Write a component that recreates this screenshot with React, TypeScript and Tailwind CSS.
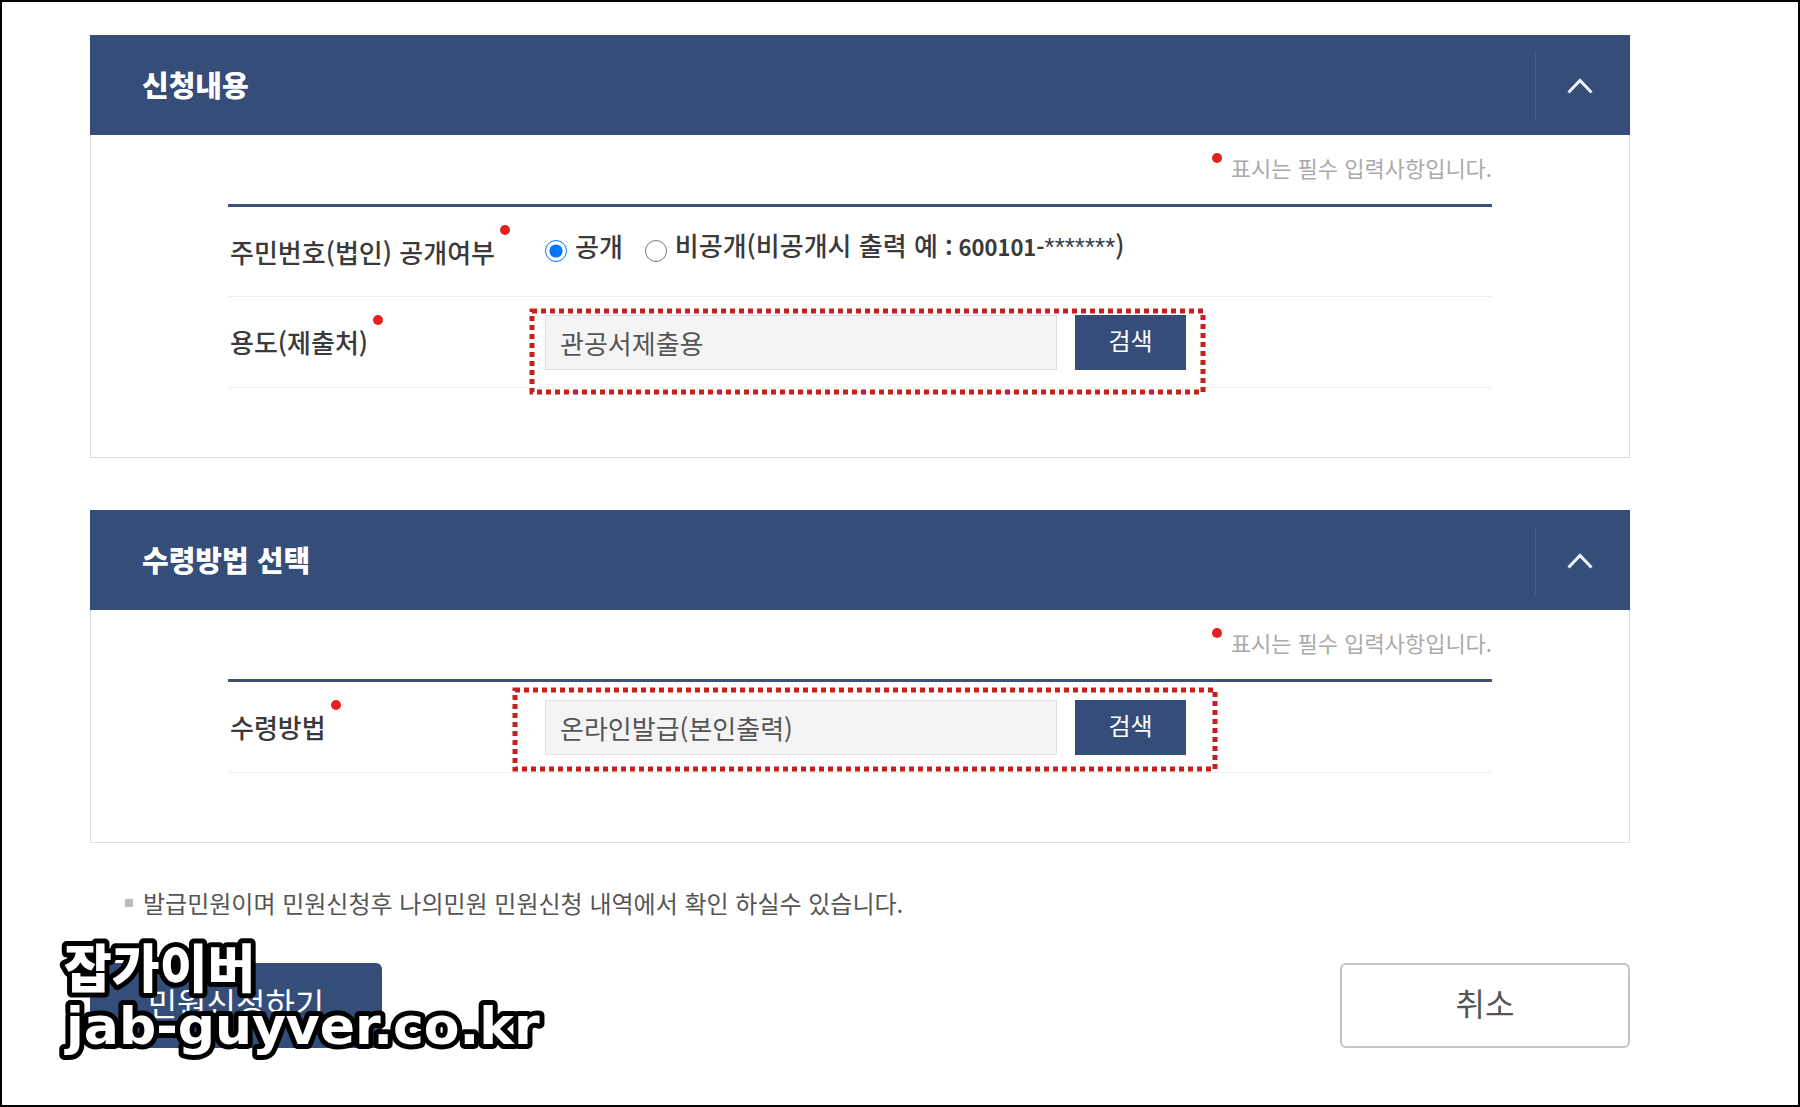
import { useState, type ReactNode } from "react";
import clsx from "clsx";

interface PanelProps {
  title: string;
  children: ReactNode;
}

interface SearchFieldProps {
  id: string;
  value: string;
  frameClassName: string;
}

function RequiredDot({ className }: { className?: string }) {
  return <span aria-hidden="true" className={clsx("size-[10px] shrink-0 rounded-full bg-[#e62020]", className)} />;
}

function Panel({ title, children }: PanelProps) {
  const [open, setOpen] = useState(true);

  return (
    <section>
      <header className="flex h-[100px] items-center bg-[#344d79] pt-[2px] pl-[52px]">
        <h2 className="flex-1 pb-[4px] text-[29px] leading-[40px] font-black text-white">{title}</h2>
        <button
          type="button"
          aria-label={title}
          aria-expanded={open}
          onClick={() => setOpen(!open)}
          className="flex h-[68px] w-[95px] items-center justify-center border-l border-[#47608a] pr-[6px] text-[#eef2f8]"
        >
          <svg width="26" height="16" viewBox="0 0 26 16" fill="none" stroke="currentColor" strokeWidth="3">
            <path d="M1.5 14.5 13 2.5l11.5 12" />
          </svg>
        </button>
      </header>
      {open && (
        <div className="border border-t-0 border-[#dcdcdc] px-[137px] pb-[69px]">
          <p className="flex h-[69px] items-center justify-end gap-[9px] pb-[5px] text-[22px] leading-[32px] text-[#aaa]">
            <RequiredDot className="mb-[18px]" />
            표시는 필수 입력사항입니다.
          </p>
          <div className="border-t-3 border-[#3d5276]">{children}</div>
        </div>
      )}
    </section>
  );
}

function Row({ label, htmlFor, children }: { label: string; htmlFor?: string; children: ReactNode }) {
  const text = (
    <>
      {label}
      <RequiredDot className="mb-[44px]" />
    </>
  );
  const labelClass =
    "flex w-[317px] shrink-0 items-center gap-[5px] pl-[2px] text-[26px] leading-[36px] font-medium text-[#3a3a3a]";

  return (
    <div className={clsx("flex items-center border-b border-[#eee]", htmlFor ? "h-[91px]" : "h-[90px]")}>
      {htmlFor ? (
        <label htmlFor={htmlFor} className={labelClass}>{text}</label>
      ) : (
        <div className={labelClass}>{text}</div>
      )}
      {children}
    </div>
  );
}

function SearchField({ id, value, frameClassName }: SearchFieldProps) {
  return (
    <div className="relative flex w-[641px] gap-[18px]">
      <input
        id={id}
        type="text"
        readOnly
        value={value}
        className="h-[55px] min-w-0 flex-1 border border-[#e0e0e0] bg-[#f4f4f4] px-[14px] text-[26px] text-[#555] outline-none"
      />
      <button type="button" className="h-[55px] w-[111px] bg-[#344d79] pb-[4px] text-[24px] leading-[32px] text-white">
        검색
      </button>
      {/* red dotted highlight around the field */}
      <div className={clsx("pointer-events-none absolute", frameClassName)}>
        <svg className="size-full overflow-visible">
          <rect width="100%" height="100%" fill="none" stroke="#c81e1e" strokeWidth="5" strokeDasharray="5 4" />
        </svg>
      </div>
    </div>
  );
}

export default function App() {
  const [visibility, setVisibility] = useState("public");

  return (
    <main
      lang="ko"
      className="relative min-h-screen border-2 border-black bg-white pt-[33px] pr-[168px] pb-[56px] pl-[88px] font-['Noto_Sans_CJK_KR',sans-serif]"
    >
      <form onSubmit={(e) => e.preventDefault()}>
        <div className="flex flex-col gap-[52px]">
          <Panel title="신청내용">
            <Row label="주민번호(법인) 공개여부">
              <div role="radiogroup" aria-label="주민번호(법인) 공개여부" className="flex gap-[22px] text-[26px] leading-[36px] font-medium text-[#3a3a3a]">
                <label className="flex items-center gap-[8px] pb-[12px]">
                  <input
                    type="radio"
                    name="visibility"
                    className="mt-[10px] size-[22px] accent-[#0075ff]"
                    checked={visibility === "public"}
                    onChange={() => setVisibility("public")}
                  />
                  공개
                </label>
                <label className="flex items-center gap-[8px] pb-[12px]">
                  <input
                    type="radio"
                    name="visibility"
                    className="mt-[10px] size-[22px]"
                    checked={visibility === "private"}
                    onChange={() => setVisibility("private")}
                  />
                  <span>
                    비공개(비공개시 출력 예 <span className="text-[22px] font-bold">: 600101-</span>
                    <span className="font-['Liberation_Sans',sans-serif] font-normal">*******</span>)
                  </span>
                </label>
              </div>
            </Row>
            <Row label="용도(제출처)" htmlFor="purpose">
              <SearchField
                id="purpose"
                value="관공서제출용"
                frameClassName="-top-[4px] -right-[17px] -bottom-[22px] -left-[13px]"
              />
            </Row>
          </Panel>

          <Panel title="수령방법 선택">
            <Row label="수령방법" htmlFor="delivery">
              <SearchField
                id="delivery"
                value="온라인발급(본인출력)"
                frameClassName="-top-[10px] -right-[29px] -bottom-[14px] -left-[30px]"
              />
            </Row>
          </Panel>
        </div>

        <p className="mt-[42px] flex items-center gap-[10px] pl-[35px] text-[24px] leading-[36px] text-[#555]">
          <span className="size-[8px] bg-[#bbb]" />
          발급민원이며 민원신청후 나의민원 민원신청 내역에서 확인 하실수 있습니다.
        </p>

        <div className="mt-[42px] flex justify-between text-[32px] leading-[44px]">
          <button type="submit" className="h-[85px] w-[292px] rounded-md bg-[#344d79] pb-[8px] text-white">
            민원신청하기
          </button>
          <button type="button" className="h-[85px] w-[290px] rounded-md border-2 border-[#c4c4c4] pb-[8px] text-[#555]">
            취소
          </button>
        </div>
      </form>

      {/* site watermark */}
      <svg
        width="500"
        height="120"
        className="pointer-events-none absolute bottom-[45px] left-[58px] overflow-visible fill-white stroke-black [paint-order:stroke]"
        strokeWidth="10"
        strokeLinejoin="round"
      >
        <text x="4" y="48" className="text-[52px] font-black">잡가이버</text>
        <text x="6" y="104" className="font-['DejaVu_Sans',sans-serif] text-[52px] font-bold">jab-guyver.co.kr</text>
      </svg>
    </main>
  );
}
